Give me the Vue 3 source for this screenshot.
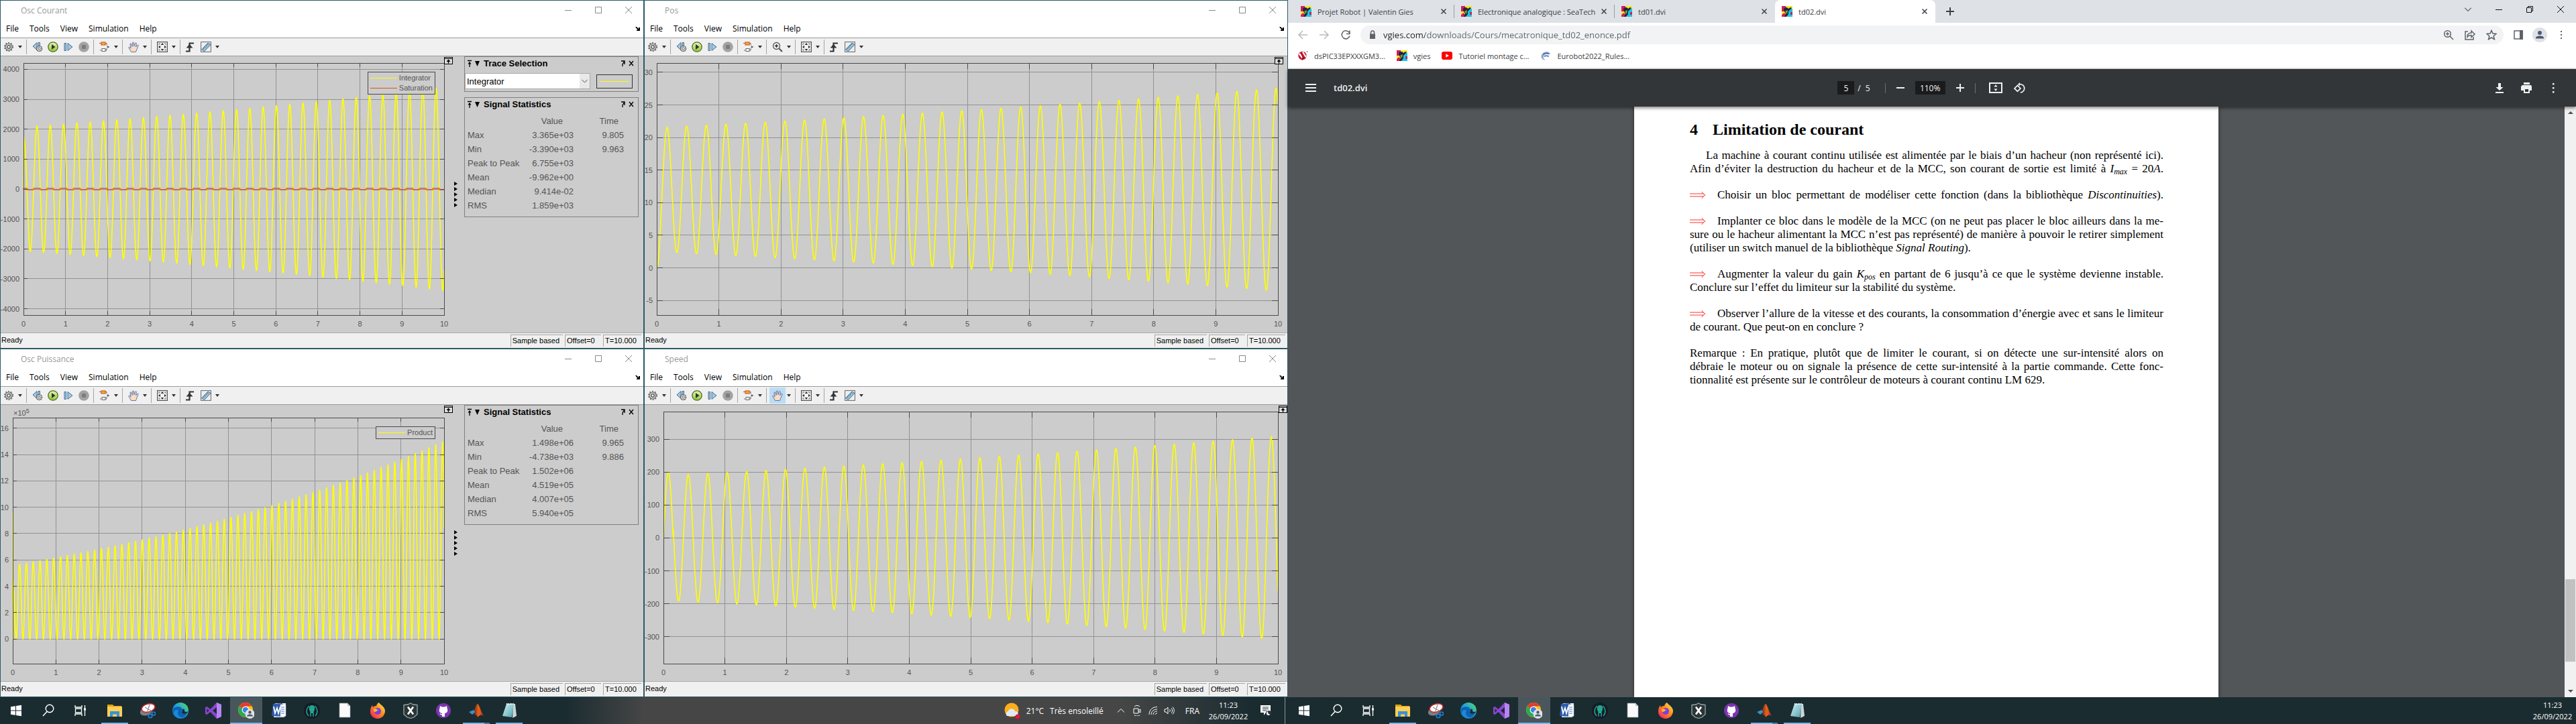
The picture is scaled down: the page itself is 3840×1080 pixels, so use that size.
<script setup>
const PERIOD = 0.3163

function curve(fn, min, max) {
  const pts = []
  for (let i = 0; i <= 4000; i++) {
    const t = i / 400
    const y = ((max - fn(t)) / (max - min)) * 1000
    pts.push(`${(t * 100).toFixed(1)},${y.toFixed(1)}`)
  }
  return pts.join(' ')
}

const grow = (t) => Math.exp(0.0494 * t)
const phase = (t) => (2 * Math.PI * t) / PERIOD

const current = (t) => {
  if (t < 0.01) return 120000 * t
  return (t < 0.08 ? 1740 : 2070) * grow(t) * Math.cos(phase(t - 0.004))
}
const saturation = (t) => (current(t) > 0 ? 20 : -20)
const position = (t) =>
  t < 0.165 ? 10.7 - 10.7 * Math.cos((Math.PI * t) / 0.165) : 12 - 9.5 * grow(t) * Math.cos(phase(t - 0.007))
const power = (t) => {
  if (t === 0) return 0
  if (t < 0.004) return 9.6
  return (t < 0.06 ? 4.6 : 5.6) * grow(t) ** 2 * (0.5 + 0.5 * Math.cos(2 * phase(t)))
}
const speed = (t) => (t < 0.16 ? 199 : 189) * grow(t) * Math.sin(phase(t - (t < 0.16 ? 0 : 0.009)))

const windows = [
  {
    id: 'courant', title: 'Osc Courant', tool: 'hand', min: -4210, max: 4210, cls: 'plot-wide-axis', tick: 6,
    labels: [4000, 3000, 2000, 1000, 0, -1000, -2000, -3000, -4000],
    curves: [{ color: '#ffff00', fn: current, w: 1.6 }, { color: '#d95319', fn: saturation, w: 2, o: 0.7 }],
    legend: [{ name: 'Integrator', color: '#ffff00' }, { name: 'Saturation', color: '#d95319' }],
    trace: true,
    stats: [['Max', '3.365e+03', '9.805'], ['Min', '-3.390e+03', '9.963'], ['Peak to Peak', '6.755e+03', ''], ['Mean', '-9.962e+00', ''], ['Median', '9.414e-02', ''], ['RMS', '1.859e+03', '']],
  },
  {
    id: 'pos', title: 'Pos', tool: 'lens', min: -7.25, max: 31.43, cls: 'plot-full popout-in', tick: 9,
    labels: [30, 25, 20, 15, 10, 5, 0, -5],
    curves: [{ color: '#ffff00', fn: position, w: 1.6 }],
  },
  {
    id: 'puissance', title: 'Osc Puissance', tool: 'hand', min: -1.87, max: 16.8, cls: 'plot-exponent', tick: 6,
    labels: [16, 14, 12, 10, 8, 6, 4, 2, 0], exponent: true,
    curves: [{ color: '#ffff00', fn: power, w: 1.6 }],
    legend: [{ name: 'Product', color: '#ffff00' }],
    stats: [['Max', '1.498e+06', '9.965'], ['Min', '-4.738e+03', '9.886'], ['Peak to Peak', '1.502e+06', ''], ['Mean', '4.519e+05', ''], ['Median', '4.007e+05', ''], ['RMS', '5.940e+05', '']],
  },
  {
    id: 'speed', title: 'Speed', tool: 'hand', pressed: true, min: -382, max: 384, cls: 'plot-full plot-mid-axis', tick: 9,
    labels: [300, 200, 100, 0, -100, -200, -300],
    curves: [{ color: '#ffff00', fn: speed, w: 1.6 }],
  },
]
windows.forEach((w) => {
  w.curves.forEach((c) => { c.points = curve(c.fn, w.min, w.max) })
  w.ticks = w.labels.map((v) => ({ v, y: `${(((w.max - v) / (w.max - w.min)) * 100).toFixed(3)}%` }))
})

const menus = ['File', 'Tools', 'View', 'Simulation', 'Help']
const xs = [0, 1, 2, 3, 4, 5, 6, 7, 8, 9, 10]

const tabs = ['Projet Robot | Valentin Gies', 'Electronique analogique : SeaTech', 'td01.dvi', 'td02.dvi']
const bookmarks = [
  { icon: 'microchip', name: 'dsPIC33EPXXXGM3...' },
  { icon: 'favicon', name: 'vgies' },
  { icon: 'youtube', name: 'Tutoriel montage c...' },
  { icon: 'eurobot', name: 'Eurobot2022_Rules...' },
]
const system = [['start', 'Démarrer'], ['find', 'Rechercher'], ['views', 'Affichage des tâches']]
const apps = [
  { icon: 'explorer', name: 'Explorateur', open: true },
  { icon: 'snip', name: 'Capture' },
  { icon: 'edge', name: 'Edge' },
  { icon: 'vs', name: 'Visual Studio' },
  { icon: 'chrome', name: 'Chrome', active: true },
  { icon: 'word', name: 'Word' },
  { icon: 'kraken', name: 'GitKraken' },
  { icon: 'file', name: 'Document' },
  { icon: 'firefox', name: 'Firefox' },
  { icon: 'xshield', name: 'MPLAB X' },
  { icon: 'github', name: 'GitHub' },
  { icon: 'matlab', name: 'MATLAB', open: true, stacked: true },
  { icon: 'notepad', name: 'Bloc-notes', open: true },
]
</script>

<template>
  <svg class="sprite" aria-hidden="true">
    <defs>
      <linearGradient id="g-orange" x1="0" y1="0" x2="1" y2="0"><stop offset="0" stop-color="#7a1d10" /><stop offset=".5" stop-color="#e8641b" /><stop offset="1" stop-color="#b3321a" /></linearGradient>
      <linearGradient id="g-edge" x1="0" y1="1" x2="1" y2="0"><stop offset="0" stop-color="#0c59a4" /><stop offset=".5" stop-color="#1b9de2" /><stop offset="1" stop-color="#5fe35a" /></linearGradient>
      <linearGradient id="g-fire" x1="1" y1="0" x2="0" y2="1"><stop offset="0" stop-color="#fff44f" /><stop offset=".45" stop-color="#ff8a1e" /><stop offset="1" stop-color="#f5156c" /></linearGradient>
      <linearGradient id="g-play" x1="0" y1="0" x2="0" y2="1"><stop offset="0" stop-color="#eaf7b4" /><stop offset="1" stop-color="#8cc63a" /></linearGradient>
      <linearGradient id="g-note" x1="0" y1="0" x2="1" y2="1"><stop offset="0" stop-color="#d4f2f5" /><stop offset="1" stop-color="#4fa3ad" /></linearGradient>
    </defs>
    <symbol id="app" viewBox="0 0 16 16"><rect x=".5" y=".5" width="15" height="15" fill="#f3f3f3" stroke="#9aa4ad" /><path d="M1 1h14v2H1z" fill="#8db4d6" /><path d="M2.500 9 6 7l1.500 1.500L5 11.500z" fill="#2a6fb0" /><path d="M6 7C8 6 8.500 3.500 9.500 3.500S12 9 14 12c-2-1-3-.5-5 1.500-.6-2-1-2.500-3-2.500l1.500-2.500z" fill="url(#g-orange)" /></symbol>
    <symbol id="gear" viewBox="0 0 16 16"><circle cx="8" cy="8" r="5" fill="#d8d8d8" stroke="#5a5a5a" stroke-width="1.100" /><circle cx="8" cy="8" r="6.300" fill="none" stroke="#5a5a5a" stroke-width="1.300" stroke-dasharray="2 2" /><circle cx="8" cy="8" r="2.300" fill="#f0f0f0" stroke="#4f4f4f" stroke-width="1.300" /></symbol>
    <symbol id="stepback" viewBox="0 0 16 16"><path d="M7 1.500v11L1 7zM9 1.500h2.500V8H9z" fill="#a5c8e4" stroke="#416f93" /><circle cx="10.500" cy="10.500" r="4" fill="#e2e2e2" stroke="#555" stroke-width="1.400" stroke-dasharray="2 .6" /><circle cx="10.500" cy="10.500" r="1.600" fill="#fff" stroke="#555" /></symbol>
    <symbol id="play" viewBox="0 0 16 16"><circle cx="8" cy="8" r="7.200" fill="url(#g-play)" stroke="#4e6b1e" stroke-width="1.300" /><path d="M6 4l5.500 4L6 12z" fill="#333" /></symbol>
    <symbol id="step" viewBox="0 0 16 16"><path d="M2 2.500h2.500v11H2zM7 2.500 14 8l-7 5.500z" fill="#a5c8e4" stroke="#416f93" /></symbol>
    <symbol id="stop" viewBox="0 0 16 16"><circle cx="8" cy="8" r="7.800" fill="#a3a3a3" /><path d="M5 5h6v6H5z" fill="#7d7d7d" /></symbol>
    <symbol id="blocks" viewBox="0 0 16 16"><path d="M5 2.500h6v3M11 8h4M8 13h3v-3M3 2.500H0M3 13H1" fill="none" stroke="#666" /><rect x="3" y="1" width="6" height="4" fill="#f7a45a" stroke="#d66b12" stroke-width="1.300" /><rect x="4" y="10.500" width="5" height="4" fill="#fff" stroke="#666" /><path d="M12 6l3 2-3 2z" fill="#666" /></symbol>
    <symbol id="hand" viewBox="0 0 16 16"><path d="M4.500 15.500 1 9.500c-.5-1.500 1-2 2-.5l1 1.200L3 4c0-1.500 1.500-1.700 2 0l1 3.500L6.500 2c.2-1.500 1.800-1.500 2 0l.2 5L10.500 2.500c.5-1.300 2-1 1.800.5l-.8 5L13.500 5.500c.9-1 2.100-.2 1.500 1L13 11.500l-1.500 4z" fill="#fbdcc0" stroke="#4a6cae" stroke-width=".9" /></symbol>
    <symbol id="lens" viewBox="0 0 16 16"><circle cx="6.500" cy="6.500" r="5" fill="#f3f6fa" stroke="#555" stroke-width="1.300" /><path d="M6.500 4v5M4 6.500h5" stroke="#222" stroke-width="1.300" /><path d="M10.500 10.500 15 15" stroke="#555" stroke-width="2.200" /></symbol>
    <symbol id="fit" viewBox="0 0 16 16"><rect x=".6" y=".6" width="14.800" height="14.800" fill="#f2f2f2" stroke="#555" stroke-width="1.200" /><path d="M8 2l2.300 3H5.700zM8 14l2.300-3H5.700zM2 8l3-2.300v4.600zM14 8l-3-2.300v4.600z" fill="#333" /><path d="M3 5V3h2M11 3h2v2M13 11v2h-2M5 13H3v-2" fill="none" stroke="#777" /></symbol>
    <symbol id="trigger" viewBox="0 0 16 16"><path d="M2 14.500h5.500V2.500H14" fill="none" stroke="#333" stroke-width="2.200" /><path d="M2.500 9.500 7.500 4l5 5.500z" fill="#333" /></symbol>
    <symbol id="ruler" viewBox="0 0 16 16"><rect x=".6" y=".6" width="14.800" height="14.800" fill="#eee" stroke="#666" /><path d="M1.500 12 11 2l4 2.500L5.500 14.500z" fill="#9cc7de" stroke="#3b6c8c" /><path d="M4 10l1.500 1M6 8l1.500 1M8 6l1.500 1M10 4l1.500 1" stroke="#2b4d66" /></symbol>
    <symbol id="popout" viewBox="0 0 13 11"><rect x=".5" y=".5" width="12" height="10" fill="#ddd" stroke="#000" /><path d="M1 2.500h11" stroke="#000" /><path d="M6.500 9.500V5" stroke="#000" stroke-width="1.500" /><path d="M3.500 7 6.500 3.500 9.500 7z" /></symbol>
    <symbol id="favicon" viewBox="0 0 16 16"><path fill="#f6e71d" d="M0 0h16v16H0z" /><path fill="#12c8e8" d="M9 4h7v12H8z" /><path fill="#d41c5c" d="M0 0h6v4H3v4H0zM0 13l4-3 3 6H0zM13 9h3v4h-3z" /><path d="M3 4c2-3 6-2 7 0l3-2 2 1-3 3-2 2v4l-3 4H4l2-5-3-4z" fill="#2b2140" /><path d="M5 8l4-2-1 6z" fill="#6db33c" /></symbol>
    <symbol id="microchip" viewBox="0 0 16 16"><circle cx="7.500" cy="8" r="6.200" fill="#c8102e" /><path d="M1.500 5.500 4.500 4 8 9.500 6.500 12zM7 3l2.500-1.500L14 8l-2 3z" fill="#fff" /><path d="M4.500 4 9 12l-2 3M9.500 2l3.500 6" stroke="#8f0b20" fill="none" /><circle cx="14.500" cy="2" r=".8" fill="#444" /></symbol>
    <symbol id="youtube" viewBox="0 0 16 16"><rect y="2" width="16" height="12" rx="3" fill="#f00" /><path d="M6.300 5.200 11 8l-4.700 2.800z" fill="#fff" /></symbol>
    <symbol id="eurobot" viewBox="0 0 16 16"><path d="M13 3C9 1 2 4 1.500 8.500S6 15 8 14.500C4.500 13 4 10 6 7.500S11 5 15.500 6z" fill="#8fa9cc" /><path d="M4 6c3-2 6-2 9-.5M6 9c2-1 4-1.200 7 0" stroke="#3d66a8" stroke-width="1.400" fill="none" /></symbol>
    <symbol id="start" viewBox="0 0 24 24"><path d="M4 6.300 11 5.200v6.300H4zM12 5l8-1.200v7.700h-8zM4 12.500h7v6.300L4 17.800zM12 12.500h8v7.700L12 19z" fill="#fff" /></symbol>
    <symbol id="find" viewBox="0 0 24 24"><circle cx="14" cy="9" r="5.800" fill="none" stroke="#fff" stroke-width="1.400" /><path d="M10 13.500 4 20" stroke="#fff" stroke-width="1.500" /></symbol>
    <symbol id="views" viewBox="0 0 24 24"><path d="M4 4v3h10V4M4 20v-3h10v3M4.500 9h9v6h-9zM18.500 4v16" fill="none" stroke="#fff" stroke-width="1.300" /><path d="M17 8.500h3v3h-3z" fill="#fff" /></symbol>
    <symbol id="explorer" viewBox="0 0 24 24"><path d="M1 3h8l2 2h11v6H1z" fill="#e2a00e" /><path d="M1 6h22v15H1z" fill="#fccf57" /><path d="M5 13h14v8h-4v-3.500H9V21H5z" fill="#3b91d4" /></symbol>
    <symbol id="snip" viewBox="0 0 24 24"><ellipse cx="10" cy="13" rx="9.500" ry="6" transform="rotate(-20 10 13)" fill="#777f86" /><ellipse cx="13" cy="8" rx="10" ry="6" transform="rotate(-15 13 8)" fill="#fff" stroke="#d22b2b" stroke-width="1.600" /><path d="M15 3l-3 10M8 7l9 5" stroke="#8a9299" stroke-width="1.300" /><circle cx="16" cy="20" r="2.700" fill="none" stroke="#1f7fd0" stroke-width="1.700" /><circle cx="21" cy="16.500" r="2.500" fill="none" stroke="#1f7fd0" stroke-width="1.700" /></symbol>
    <symbol id="edge" viewBox="0 0 24 24"><circle cx="12" cy="12" r="12" fill="url(#g-edge)" /><path d="M1 10C4 5 14 5 15 11c.3 2-1 3-1 4 0 2 5 3 8.500 0C20 22 12 24.500 6 21 2 18 0 14 1 10z" fill="#0d62b3" /><path d="M9 12c-3 4 0 10 7 10-6 3-13 0-14-6 0-5 5-6 7-4z" fill="#1a8ad8" /><path d="M15 11c.3 2-1 3-1 4 0 2 5 3 8.500 0l1.500-2c-3 2-6 1-6-1s-1-4-3-1z" fill="#1b2c31" /></symbol>
    <symbol id="vs" viewBox="0 0 24 24"><path d="M17 0l7 3v18l-7 3L7.500 14 2.500 18 0 17V7l2.500-1 5 4z" fill="#8a45d2" /><path d="M17 0l7 3v18l-7 3z" fill="#b884f2" /><path d="M17 7v10l-6-5zM2.500 9v6l3-3z" fill="#1b2c31" /></symbol>
    <symbol id="chrome" viewBox="0 0 24 24"><circle cx="11" cy="11" r="11" fill="#fbc116" /><path d="M11 11 1.500 5.500A11 11 0 0 1 20.500 5.500H11z" fill="#e33b2e" /><path d="M11 11l-9.500-5.500A11 11 0 0 0 11 22l5-8z" fill="#2da94f" /><circle cx="11" cy="11" r="5.400" fill="#fff" /><circle cx="11" cy="11" r="4.200" fill="#3f7fea" /><circle cx="17.500" cy="17" r="7" fill="#dfe3e8" /><circle cx="17.500" cy="14.500" r="2.200" fill="#4d5967" /><path d="M13 20.500c0-4 9-4 9 0z" fill="#4d5967" /></symbol>
    <symbol id="word" viewBox="0 0 24 24"><path d="M6 1h16v19l-3 2H4z" fill="#e9eef7" /><path d="M3 2 17 1v20L1 20z" fill="#2d5bab" /><path d="M14 3h8v17l-8 1z" fill="#fff" stroke="#b8c6de" stroke-width=".6" /><path d="M15 7h5M15 10h5M15 13h5M15 16h5" stroke="#4b77c0" /><path d="M4 6l2 10 3-8 2 8 3-10" fill="none" stroke="#fff" stroke-width="1.800" /></symbol>
    <symbol id="kraken" viewBox="0 0 24 24"><circle cx="12" cy="12" r="12" fill="#141b27" /><path d="M7 20C3 16 3 9 8 5M17 20c4-4 4-11-1-15M10 21v-6M14 21v-6" fill="none" stroke="#23a58f" stroke-width="1.500" /><path d="M12 4c5 0 5 6 3 9l-1 3h-4l-1-3c-2-3-2-9 3-9z" fill="#23a58f" /></symbol>
    <symbol id="file" viewBox="0 0 24 24"><path d="M4 1h12l4 4v17H4z" fill="#fafafa" stroke="#999" stroke-width=".7" /><path d="M16 1v4h4z" fill="#bbb" /></symbol>
    <symbol id="firefox" viewBox="0 0 24 24"><path d="M14 0c1 3 8 5 9 12 0 7-5 12-11 12S0 19 1 12c0-4 2-6 3-8l1 3c2-2 4-2 5-2 1-3 2-4 4-5z" fill="url(#g-fire)" /><circle cx="12" cy="13" r="5" fill="#7a3fe0" /><path d="M6 10c3-2 5 1 7 1-1 2-3 1-4 3-2 0-4-2-3-4z" fill="#ffb52e" /></symbol>
    <symbol id="xshield" viewBox="0 0 24 24"><path d="M12 1 16 3l6 .5v14L17 22l-5 1.500L7 22l-5-4.500v-14L8 3z" fill="#2c3638" stroke="#9aa5a8" stroke-width="1.300" /><path d="M8 6.500l8 11M16 6.500l-8 11" stroke="#fff" stroke-width="2.800" /></symbol>
    <symbol id="github" viewBox="0 0 24 24"><circle cx="12" cy="12" r="11" fill="#7b35b0" /><path d="M7 5l3 1.500h4L17 5l.7 4c1.500 4 0 6.500-3.700 7v5h-4v-2.500c-3 .5-3-2-4-2.500 2 0 2 1.500 4 1v-1C6.300 15.500 4.800 13 6.300 9z" fill="#fff" /></symbol>
    <symbol id="matlab" viewBox="0 0 24 24"><path d="M1 14l7-3 3 3-5 4z" fill="#3a8fc4" /><path d="M8 11c3-2 4-9 6-9s5 12 9 18c-4-3-6-1-9 2-1-3-2-4-5-4l2-4z" fill="url(#g-orange)" /></symbol>
    <symbol id="notepad" viewBox="0 0 24 24"><path d="M18 2h3l2 18-6 3z" fill="#cdd5d8" /><path d="M8 2h11l-3 20-14-2z" fill="url(#g-note)" /><path d="M8 2h11" stroke="#fff" stroke-width="2" stroke-dasharray="1.500 1" /></symbol>
  </svg>

  <main class="desktops">
    <section class="desktop">
      <div class="scopes">
        <article v-for="w in windows" :key="w.id" class="scope">
          <header class="title">
            <svg class="i16"><use href="#app" /></svg>
            <h2>{{ w.title }}</h2>
            <div class="controls">
              <button aria-label="Réduire"><svg viewBox="0 0 10 10"><path d="M0 5.500h10" /></svg></button>
              <button aria-label="Agrandir"><svg viewBox="0 0 10 10"><path d="M.5.5h9v9h-9z" /></svg></button>
              <button aria-label="Fermer"><svg viewBox="0 0 10 10"><path d="M0 0l10 10M10 0 0 10" /></svg></button>
            </div>
          </header>
          <nav class="menu">
            <button v-for="m in menus" :key="m">{{ m }}</button>
            <svg class="dock" viewBox="0 0 7 6"><path d="M0 0h2l3 3V1h2v5H2V4.500h1.500z" /></svg>
          </nav>
          <div class="tools">
            <button class="drop" aria-label="Configuration"><svg class="i16"><use href="#gear" /></svg><i></i></button>
            <span class="group">
              <button aria-label="Reculer"><svg class="i16"><use href="#stepback" /></svg></button>
              <button aria-label="Lancer"><svg class="i16"><use href="#play" /></svg></button>
              <button aria-label="Avancer"><svg class="i16"><use href="#step" /></svg></button>
              <button aria-label="Arrêter"><svg class="i16"><use href="#stop" /></svg></button>
            </span>
            <button class="drop" aria-label="Blocs"><svg class="i16"><use href="#blocks" /></svg><i></i></button>
            <button class="drop" :class="{ pressed: w.pressed }" aria-label="Déplacer"><svg class="i16"><use :href="'#' + w.tool" /></svg><i></i></button>
            <button class="drop" aria-label="Ajuster"><svg class="i16"><use href="#fit" /></svg><i></i></button>
            <button class="plain" aria-label="Déclencheur"><svg class="i16"><use href="#trigger" /></svg></button>
            <button class="drop last" aria-label="Mesures"><svg class="i16"><use href="#ruler" /></svg><i></i></button>
          </div>
          <div class="canvas">
            <div class="plot" :class="w.cls">
              <svg class="axes" role="img" :aria-label="w.title">
                <g class="grid">
                  <line v-for="x in xs.slice(1, 10)" :key="'g' + x" :x1="x * 10 + '%'" :x2="x * 10 + '%'" y1="0" y2="100%" />
                  <line v-for="k in w.ticks" :key="k.v" :y1="k.y" :y2="k.y" x1="0" x2="100%" />
                </g>
                <svg width="100%" height="100%" viewBox="0 0 1000 1000" preserveAspectRatio="none">
                  <polyline v-for="(c, i) in w.curves" :key="i" :points="c.points" fill="none" :stroke="c.color" :stroke-width="c.w" :stroke-opacity="c.o || 1" stroke-linejoin="round" vector-effect="non-scaling-stroke" />
                </svg>
                <g class="frame">
                  <rect width="100%" height="100%" />
                  <template v-for="x in xs.slice(1, 10)" :key="'t' + x">
                    <svg :x="x * 10 + '%'" y="0"><path :d="`M0 0v${w.tick}`" /></svg>
                    <svg :x="x * 10 + '%'" y="100%"><path :d="`M0 0v-${w.tick}`" /></svg>
                  </template>
                  <template v-for="k in w.ticks" :key="k.v">
                    <svg x="0" :y="k.y"><path :d="`M0 0h${w.tick}`" /></svg>
                    <svg x="100%" :y="k.y"><path :d="`M0 0h-${w.tick}`" /></svg>
                  </template>
                </g>
                <text v-for="x in xs" :key="'x' + x" :x="x * 10 + '%'" y="100%" dy="17" text-anchor="middle">{{ x }}</text>
                <text v-for="k in w.ticks" :key="'y' + k.v" x="-6" :y="k.y" dy="4" text-anchor="end">{{ k.v }}</text>
                <text v-if="w.exponent" x="1" y="-3">×10<tspan dy="-4" class="sup">5</tspan></text>
              </svg>
              <ul v-if="w.legend" class="legend">
                <li v-for="l in w.legend" :key="l.name"><b :style="{ background: l.color }"></b>{{ l.name }}</li>
              </ul>
              <svg class="popout"><use href="#popout" /></svg>
            </div>
            <div v-if="w.stats" class="splitter"><i v-for="n in 5" :key="n"></i></div>
            <aside v-if="w.stats" class="side">
              <section v-if="w.trace" class="panel">
                <h3><svg viewBox="0 0 22 12"><path d="M2 1.500h6M5 11V4" stroke="#000" stroke-width="1.300" /><path d="M2.500 6.500 5 3l2.500 3.500zM13 2h7l-3.500 8z" /></svg>Trace Selection
                  <svg class="end" viewBox="0 0 22 12"><path d="M2 2h5v5M7 2 4 7v3M14 2l6 7M20 2l-6 7" fill="none" stroke="#000" stroke-width="1.300" /></svg></h3>
                <div class="trace">
                  <select aria-label="Trace"><option>Integrator</option></select>
                  <button aria-label="Couleur"><b></b></button>
                </div>
              </section>
              <section class="panel">
                <h3><svg viewBox="0 0 22 12"><path d="M2 1.500h6M5 11V4" stroke="#000" stroke-width="1.300" /><path d="M2.500 6.500 5 3l2.500 3.500zM13 2h7l-3.500 8z" /></svg>Signal Statistics
                  <svg class="end" viewBox="0 0 22 12"><path d="M2 2h5v5M7 2 4 7v3M14 2l6 7M20 2l-6 7" fill="none" stroke="#000" stroke-width="1.300" /></svg></h3>
                <table>
                  <thead><tr><th></th><th>Value</th><th>Time</th></tr></thead>
                  <tbody><tr v-for="r in w.stats" :key="r[0]"><th>{{ r[0] }}</th><td>{{ r[1] }}</td><td>{{ r[2] }}</td></tr></tbody>
                </table>
              </section>
            </aside>
          </div>
          <footer class="status"><span class="ready">Ready</span><span>Sample based</span><span>Offset=0</span><span class="time">T=10.000</span></footer>
        </article>
      </div>
    </section>

    <section class="browser">
      <div class="tabs">
        <div v-for="(t, i) in tabs" :key="t" class="tab" :class="{ current: i === 3, before: i === 2 }">
          <svg class="i16"><use href="#favicon" /></svg><a href="#">{{ t }}</a>
          <button aria-label="Fermer l'onglet"><svg viewBox="0 0 8 8"><path d="M.5.5l7 7M7.500.5l-7 7" /></svg></button>
        </div>
        <button class="newtab" aria-label="Nouvel onglet"><svg viewBox="0 0 12 12"><path d="M6 0v12M0 6h12" /></svg></button>
        <div class="controls">
          <button aria-label="Onglets"><svg viewBox="0 0 10 10"><path d="M0 2.500l5 5 5-5" /></svg></button>
          <button aria-label="Réduire"><svg viewBox="0 0 10 10"><path d="M0 5.500h10" /></svg></button>
          <button aria-label="Restaurer"><svg viewBox="0 0 10 10"><path d="M.5 2.500h7v7h-7zM2.500 2V.5h7v7H8" /></svg></button>
          <button aria-label="Fermer"><svg viewBox="0 0 10 10"><path d="M0 0l10 10M10 0 0 10" /></svg></button>
        </div>
      </div>
      <div class="navbar">
        <button class="off" aria-label="Précédent"><svg viewBox="0 0 16 16"><path d="M15 8H2M8 2 2 8l6 6" /></svg></button>
        <button class="off" aria-label="Suivant"><svg viewBox="0 0 16 16"><path d="M1 8h13M8 2l6 6-6 6" /></svg></button>
        <button aria-label="Actualiser"><svg viewBox="0 0 16 16"><path d="M13.500 5A6 6 0 1 0 14 9.500M14 1.500v5H9" /></svg></button>
        <div class="address">
          <svg class="lock" viewBox="0 0 10 14"><path d="M1 5.500h8V13H1z" fill="#5f6368" /><path d="M2.500 6V3.500a2.500 2.500 0 0 1 5 0V6" fill="none" stroke="#5f6368" stroke-width="1.500" /></svg>
          <input aria-label="Adresse" value="vgies.com/downloads/Cours/mecatronique_td02_enonce.pdf" spellcheck="false">
          <button aria-label="Zoom"><svg viewBox="0 0 16 16"><circle cx="6.500" cy="6.500" r="4.800" /><path d="M10 10l5 5M6.500 4v5M4 6.500h5" /></svg></button>
          <button aria-label="Partager"><svg viewBox="0 0 16 16"><path d="M5 3H1v12h12v-4M4 11c0-4 2-6 6-6V2l5 5-5 4.500V8.500C7 8.500 5.500 9 4 11z" /></svg></button>
          <button aria-label="Favori"><svg viewBox="0 0 16 16"><path d="M8 1.500l2 4.600 5 .4-3.800 3.300 1.200 4.900L8 12l-4.400 2.700 1.200-4.900L1 6.500l5-.4z" /></svg></button>
        </div>
        <button aria-label="Panneau latéral"><svg viewBox="0 0 16 16"><path d="M2 2h12v12H2z" /><path d="M10 1h5v14h-5z" fill="#5f6368" stroke="none" /></svg></button>
        <button aria-label="Profil" class="profile"><svg viewBox="0 0 22 22"><circle cx="11" cy="11" r="11" fill="#dfe1e6" stroke="none" /><circle cx="11" cy="8" r="3" fill="#4b5a70" stroke="none" /><path d="M5 16.500v-1c0-4 12-4 12 0v1z" fill="#4b5a70" stroke="none" /></svg></button>
        <button aria-label="Menu"><svg viewBox="0 0 16 16"><path d="M7 2h2v2H7zM7 7h2v2H7zM7 12h2v2H7z" fill="#5f6368" stroke="none" /></svg></button>
      </div>
      <nav class="bookmarks"><a v-for="b in bookmarks" :key="b.name" href="#"><svg class="i16"><use :href="'#' + b.icon" /></svg>{{ b.name }}</a></nav>
      <div class="pdfbar">
        <div class="name"><button aria-label="Sommaire"><svg viewBox="0 0 16 12"><path d="M0 0h16v2H0zM0 5h16v2H0zM0 10h16v2H0z" /></svg></button><h1>td02.dvi</h1></div>
        <div class="pager">
          <input class="page-no" aria-label="Page" value="5"><span>/</span><span class="count">5</span><i></i>
          <button aria-label="Zoom arrière"><svg viewBox="0 0 12 12"><path d="M0 5h12v2H0z" /></svg></button>
          <input class="zoom" aria-label="Zoom" value="110%">
          <button aria-label="Zoom avant"><svg viewBox="0 0 12 12"><path d="M5 0h2v5h5v2H7v5H5V7H0V5h5z" /></svg></button><i></i>
          <button class="big" aria-label="Ajuster à la page"><svg viewBox="0 0 20 16"><path d="M1 1h18v14H1z" fill="none" stroke="#f1f1f1" stroke-width="2" /><path d="M10 3l2.500 3.500h-5zM10 13l2.500-3.500h-5z" /></svg></button>
          <button class="big" aria-label="Pivoter"><svg viewBox="0 0 20 18"><path d="M6 5l5 5-5 5-5-5z M9 3c10-1 12 12 2 14" fill="none" stroke="#f1f1f1" stroke-width="2" /><path d="M10 0v6L6.500 3z" /></svg></button>
        </div>
        <div class="actions">
          <button aria-label="Télécharger"><svg viewBox="0 0 16 16"><path d="M6 1h4v6h3.500L8 12 2.500 7H6zM2 14h12v2H2z" /></svg></button>
          <button aria-label="Imprimer"><svg viewBox="0 0 16 16"><path d="M4 0h9v3H4zM2 4h13l1 2v6h-3v4H4v-4H0V6zM6 10v4h5v-4z" fill-rule="evenodd" /></svg></button>
          <button aria-label="Plus"><svg viewBox="0 0 16 16"><path d="M7 1h2.500v2.500H7zM7 7h2.500v2.500H7zM7 13h2.500v2.500H7z" /></svg></button>
        </div>
      </div>
      <div class="viewer">
        <div class="sheetwrap">
          <article class="sheet">
            <h2><span>4</span>Limitation de courant</h2>
            <p><span class="ln full indent">La machine à courant continu utilisée est alimentée par le biais d’un hacheur (non représenté ici).</span>
              <span class="ln full">Afin d’éviter la destruction du hacheur et de la MCC, son courant de sortie est limité à <em>I<sub>max</sub></em> = 20<em>A</em>.</span></p>
            <p><span class="ln full"><svg class="arrow" viewBox="0 0 24 10"><path d="M0 3h21M0 7h21M18 0c1 3 3 4 5 5-2 1-4 2-5 5" /></svg>Choisir un bloc permettant de modéliser cette fonction (dans la bibliothèque <em>Discontinuities</em>).</span></p>
            <p><span class="ln full"><svg class="arrow" viewBox="0 0 24 10"><path d="M0 3h21M0 7h21M18 0c1 3 3 4 5 5-2 1-4 2-5 5" /></svg>Implanter ce bloc dans le modèle de la MCC (on ne peut pas placer le bloc ailleurs dans la me-</span>
              <span class="ln full">sure ou le hacheur alimentant la MCC n’est pas représenté) de manière à pouvoir le retirer simplement</span>
              <span class="ln">(utiliser un switch manuel de la bibliothèque <em>Signal Routing</em>).</span></p>
            <p><span class="ln full"><svg class="arrow" viewBox="0 0 24 10"><path d="M0 3h21M0 7h21M18 0c1 3 3 4 5 5-2 1-4 2-5 5" /></svg>Augmenter la valeur du gain <em>K<sub>pos</sub></em> en partant de 6 jusqu’à ce que le système devienne instable.</span>
              <span class="ln">Conclure sur l’effet du limiteur sur la stabilité du système.</span></p>
            <p><span class="ln full"><svg class="arrow" viewBox="0 0 24 10"><path d="M0 3h21M0 7h21M18 0c1 3 3 4 5 5-2 1-4 2-5 5" /></svg>Observer l’allure de la vitesse et des courants, la consommation d’énergie avec et sans le limiteur</span>
              <span class="ln">de courant. Que peut-on en conclure ?</span></p>
            <p><span class="ln full">Remarque : En pratique, plutôt que de limiter le courant, si on détecte une sur-intensité alors on</span>
              <span class="ln full">débraie le moteur ou on signale la présence de cette sur-intensité à la partie commande. Cette fonc-</span>
              <span class="ln">tionnalité est présente sur le contrôleur de moteurs à courant continu LM 629.</span></p>
          </article>
        </div>
        <div class="scrollbar"><svg viewBox="0 0 8 4"><path d="M0 4l4-4 4 4z" /></svg><i class="before"></i><i class="thumb"></i><i class="after"></i><svg viewBox="0 0 8 4"><path d="M0 0l4 4 4-4z" /></svg></div>
      </div>
    </section>

    <footer v-for="side in 2" :key="side" class="taskbar" :class="{ primary: side === 1 }">
      <button v-for="s in system" :key="s[0]" class="sys" :aria-label="s[1]"><svg><use :href="'#' + s[0]" /></svg></button>
      <div class="apps">
        <button v-for="a in apps" :key="a.icon" :class="{ open: a.open, active: a.active, stacked: a.stacked }" :aria-label="a.name"><svg><use :href="'#' + a.icon" /></svg></button>
      </div>
      <div class="tray">
        <template v-if="side === 1">
          <button class="weather">
            <svg viewBox="0 0 24 24"><circle cx="11" cy="11" r="10.500" fill="#ffae19" /><path d="M4 20a4 4 0 0 1 2-7c1-5 9-5 10 0 6 0 6 7 1 7z" fill="#dcebfa" /><circle cx="20" cy="21" r="3.500" fill="#e0143c" /></svg>
            <span>21°C</span><span>Très ensoleillé</span>
          </button>
          <svg class="t" viewBox="0 0 16 16"><path d="M3 10.500l5-5 5 5" /></svg>
          <svg class="t" viewBox="0 0 16 16"><path d="M3 5h7v7H3zM10 8l3-2v5l-3-2M4 2c2-2 6-2 8 0M4 15c2 1.500 6 1.500 8 0" /></svg>
          <svg class="t" viewBox="0 0 16 16"><path d="M2 14C2 7 7 2.500 14 2.500M5 14c0-5 4-8 9-8M8 14c0-3 2-5 6-5M11 14c0-1 1-2 3-2" /></svg>
          <svg class="t" viewBox="0 0 16 16"><path d="M1 6h2l3-3v10l-3-3H1zM8.500 6c1 1 1 3 0 4M11 4c2 2 2 6 0 8M13 2.500c3 3 3 8 0 11" /></svg>
          <span class="lang">FRA</span>
        </template>
        <time>11:23<br>26/09/2022</time>
        <svg v-if="side === 1" class="note" viewBox="0 0 18 18"><path d="M1 1h15v11H9l-3 4v-4H1z" fill="#fff" /><path d="M4 4h9M4 6.500h9M4 9h6" stroke="#1d2c31" /><circle cx="13" cy="13" r="4" fill="#24343a" /><path d="M15.500 14.500a3 3 0 1 1-3-4.500 3 3 0 0 0 3 4.500z" fill="#fff" /></svg>
      </div>
    </footer>
  </main>
</template>

<style>
body { background: #1b2c31; }
</style>

<style scoped>
.sprite { position: absolute; width: 0; height: 0; }
* { box-sizing: border-box; }
button { font: inherit; color: inherit; background: none; border: 0; padding: 0; margin: 0; }
h1, h2, h3, p, ul { margin: 0; padding: 0; font-weight: 400; }
svg { display: block; }
a { color: inherit; text-decoration: none; }
.i16 { width: 16px; height: 16px; flex: none; }

.desktops { display: grid; grid-template-columns: 1fr 1fr; grid-template-rows: 1fr 40px; min-height: 100vh; font: 12px "Open Sans", "Noto Sans", sans-serif; }
.desktop { display: flex; min-width: 0; }
.scopes { flex: 1; display: grid; grid-template-columns: 1fr 1fr; grid-template-rows: 1fr 1fr; min-width: 0; }
.scope { display: flex; flex-direction: column; border: 1px solid #2b5a68; background: #fff; min-width: 0; }
.title { display: flex; align-items: center; height: 28px; padding-left: 8px; color: #999; flex: none; }
.title h2 { font-size: 12px; margin-left: 6px; }
.controls { display: flex; margin-left: auto; height: 100%; }
.controls button { width: 45px; display: grid; place-items: center; }
.controls svg { width: 10px; height: 10px; fill: none; stroke: #888; }
.menu { display: flex; align-items: center; gap: 16px; height: 27px; padding: 0 5px 0 8px; color: #000; flex: none; }
.dock { width: 7px; height: 6px; margin-left: auto; }
.tools { display: flex; align-items: center; height: 28px; flex: none; background: #f0f0f0; border-top: 1px solid #9b9b9b; border-bottom: 1px solid #9b9b9b; padding-left: 4px; }
.tools .drop { display: flex; align-items: center; width: 43px; height: 22px; padding-left: 8px; border-right: 1px solid #a5a5a5; }
.tools .drop:first-child { padding-left: 0; width: 35px; }
.tools .last { border: 0; padding-left: 4px; }
.tools .plain { padding-left: 6px; width: 26px; }
.tools .drop i { margin-left: 6px; border: 3px solid transparent; border-top: 4px solid #333; border-bottom: 0; }
.tools .pressed svg { outline: 4px solid #bcdcf4; background: #bcdcf4; }
.group { display: flex; gap: 7px; width: 100px; height: 22px; align-items: center; padding-left: 8px; border-right: 1px solid #a5a5a5; }

.canvas { flex: 1; display: flex; background: #ccc; min-height: 0; }
.plot { flex: 1; min-width: 0; position: relative; padding: 10px 13px 26px 34px; }
.plot-full { padding-left: 18px; padding-right: 14px; }
.plot-mid-axis { padding-left: 28px; }
.plot-exponent { padding-left: 18px; padding-top: 19px; }
.axes { width: 100%; height: 100%; overflow: visible; font: 11px "Liberation Sans", Arial, sans-serif; fill: #555; }
.axes svg { overflow: visible; }
.sup { font-size: 9px; }
.grid line { stroke: #929292; shape-rendering: crispEdges; }
.frame rect, .frame path { fill: none; stroke: #4a4a4a; shape-rendering: crispEdges; }
.popout { position: absolute; top: 1px; right: 0; width: 13px; height: 11px; }
.popout-in .popout { right: 6px; }
.legend { position: absolute; top: 23px; right: 26px; list-style: none; border: 1px solid #4a4a4a; background: #ccc; padding: 1px 3px; font: 11px/15px "Liberation Sans", Arial, sans-serif; color: #555; }
.plot-exponent .legend { top: 32px; }
.legend li { display: flex; align-items: center; gap: 3px; }
.legend b { width: 40px; height: 1px; }
.splitter { display: flex; flex-direction: column; justify-content: center; gap: 2px; width: 17px; padding-left: 2px; }
.splitter i { width: 0; border: 3px solid transparent; border-left: 5px solid #000; border-right: 0; }
.side { width: 260px; margin-right: 7px; display: flex; flex-direction: column; gap: 8px; font: 13px "Liberation Sans", Arial, sans-serif; color: #555; }
.panel { border: 1px solid #808080; }
.panel h3 { display: flex; align-items: center; height: 20px; padding: 0 5px 0 2px; font-size: 13px; line-height: 20px; font-weight: 700; color: #000; gap: 4px; }
.panel h3 svg { width: 22px; height: 12px; flex: none; }
.panel h3 .end { margin-left: auto; }
.trace { display: flex; gap: 9px; padding: 3px 8px 2px 0; height: 31px; align-items: center; }
.trace select { flex: 1; height: 24px; appearance: none; border: 1px solid #aaa; border-radius: 0; padding: 0 2px; color: #000; font: 13px "Liberation Sans", Arial, sans-serif; background: #fff right / 15px 100% no-repeat; background-image: url("data:image/svg+xml,%3Csvg xmlns='http://www.w3.org/2000/svg' width='15' height='24'%3E%3Cpath fill='%23e9e9e9' d='M0 0h15v24H0z'/%3E%3Cpath d='M3.500 10l4 4 4-4' fill='none' stroke='%23444'/%3E%3C/svg%3E"); }
.trace button { width: 54px; height: 21px; border: 1px solid #333; padding: 0 5px; display: flex; align-items: center; }
.trace button b { flex: 1; height: 1px; background: #ff0; }
.panel table { width: 100%; border-collapse: collapse; table-layout: fixed; margin: 4px 0 6px; }
.panel th, .panel td { height: 21px; padding: 0; text-align: right; font-weight: 400; white-space: nowrap; }
.panel th:first-child { width: 84px; padding-left: 4px; text-align: left; }
.panel th:nth-child(2), .panel td:nth-child(2) { width: 78px; }
.panel thead th:nth-child(2) { padding-right: 16px; }
.panel td:nth-child(3) { padding-right: 21px; }
.panel thead th:nth-child(3) { padding-right: 29px; }
.status { display: flex; align-items: center; gap: 3px; height: 23px; flex: none; background: #f0f0f0; border-top: 1px solid #aaa; padding: 0 3px 0 1px; font: 11px "Liberation Sans", Arial, sans-serif; color: #000; }
.status span { height: 18px; line-height: 17px; padding: 0 5px 0 2px; border-left: 1px solid #a5a5a5; border-top: 1px solid #a5a5a5; min-width: 54px; }
.status .time { min-width: 57px; }
.status .ready { flex: 1; border: 0; padding: 0; }

.browser { display: flex; flex-direction: column; min-width: 0; background: #fff; color: #3c4043; }
.tabs { display: flex; height: 34px; flex: none; background: #dee1e6; padding-left: 9px; }
.tab { width: 239px; display: flex; align-items: center; padding: 0 12px 0 10px; gap: 9px; font-size: 11px; background: linear-gradient(#9aa0a6, #9aa0a6) right / 1px 20px no-repeat; }
.tab.before, .tab.current { background-image: none; }
.tab.current { background: #fff; border-radius: 8px 8px 0 0; }
.tab a { flex: 1; overflow: hidden; white-space: nowrap; }
.tab button svg { width: 8px; height: 8px; stroke: #3c4043; stroke-width: 1.5; }
.newtab { margin-left: 16px; }
.newtab svg { width: 12px; height: 12px; stroke: #3c4043; stroke-width: 2; }
.tabs .controls { height: 28px; }
.tabs .controls button { width: 46px; }
.tabs .controls svg { stroke: #111; }
.navbar { display: flex; align-items: center; height: 36px; flex: none; padding: 0 6px; }
.navbar button { width: 32px; display: grid; place-items: center; flex: none; }
.navbar svg { width: 16px; height: 16px; fill: none; stroke: #5f6368; stroke-width: 1.5; }
.navbar .off svg { stroke: #bbb; }
.navbar .profile svg { width: 22px; height: 22px; }
.address { flex: 1; display: flex; align-items: center; height: 28px; border-radius: 14px; background: #f1f3f4; padding: 0 2px 0 13px; margin: 0 6px; }
.address .lock { width: 10px; height: 14px; margin-right: 11px; stroke: none; }
.address input { flex: 1; min-width: 0; border: 0; padding: 0; font: 13px "Open Sans", "Noto Sans", sans-serif; color: #5f6368; background: linear-gradient(90deg, #202124 62px, #5f6368 62px); -webkit-background-clip: text; background-clip: text; -webkit-text-fill-color: transparent; }
.bookmarks { display: flex; align-items: center; gap: 17px; height: 33px; flex: none; padding: 0 14px 6px; border-bottom: 1px solid #d5d5d5; font-size: 11px; }
.bookmarks a { display: flex; align-items: center; gap: 9px; }
.pdfbar { display: grid; grid-template-columns: 1fr auto 1fr; align-items: center; height: 56px; flex: none; background: #323639; color: #f1f1f1; padding: 0 26px; box-shadow: 0 2px 5px rgba(0, 0, 0, .5); z-index: 1; }
.pdfbar svg { fill: #f1f1f1; width: 16px; height: 16px; }
.name { display: flex; align-items: center; gap: 26px; }
.name svg { height: 12px; }
.name h1 { font-size: 13px; font-weight: 600; }
.pager { display: flex; align-items: center; }
.pager input { height: 20px; border: 0; padding: 0; background: #191b1c; color: #f1f1f1; text-align: center; font: 12px "Open Sans", sans-serif; }
.pager .page-no { width: 25px; }
.pager .zoom { width: 45px; }
.pager span { padding-left: 5px; }
.pager .count { padding-left: 7px; }
.pager i { width: 1px; height: 15px; margin-left: 22px; background: #6c6f71; }
.pager button { margin: 0 16px; }
.pager .zoom + button { margin-right: 0; }
.pager button svg { width: 12px; height: 12px; }
.pager .zoom + button + i { margin-left: 16px; }
.pager .big { margin: 0 0 0 20px; }
.pager .big + .big { margin-left: 16px; }
.pager .big svg { width: 20px; height: 16px; }
.actions { display: flex; justify-content: flex-end; gap: 24px; }
.viewer { flex: 1; display: flex; background: #525659; min-height: 0; }
.sheetwrap { flex: 1; display: flex; justify-content: center; }
.sheet { width: 871px; padding: 20px 82px 40px 83px; background: #fff; color: #000; box-shadow: 0 0 5px rgba(0, 0, 0, .6); font: 17px/20px "Liberation Serif", "Times New Roman", serif; }
.sheet h2 { display: flex; gap: 22px; font-size: 24px; line-height: 28px; font-weight: 700; margin-bottom: 15px; }
.sheet p { margin-bottom: 19px; }
.ln { display: block; white-space: nowrap; }
.full { text-align-last: justify; }
.indent { padding-left: 24px; }
.sheet sub { font-size: 12px; line-height: 0; vertical-align: -3px; }
.arrow { display: inline-block; width: 24px; height: 10px; margin-right: 17px; fill: none; stroke: #f33; }
.scrollbar { width: 17px; display: flex; flex-direction: column; align-items: center; padding: 7px 0; background: #f1f1f1; }
.scrollbar svg { width: 8px; height: 4px; fill: #505050; flex: none; }
.scrollbar .before { flex: 692; }
.scrollbar .thumb { flex: 123; width: 15px; background: #c1c1c1; }
.scrollbar .after { flex: 42; }

.taskbar { display: flex; height: 40px; background: #1b2c31; color: #fff; min-width: 0; }
.taskbar.primary { background: linear-gradient(90deg, #1b2c31 44%, #464646 50%, #464646 87%, #1b2c31 97%); }
.taskbar svg { width: 24px; height: 24px; }
.taskbar .sys { width: 48px; display: grid; place-items: center; }
.apps { display: flex; gap: 1px; padding-left: 3px; }
.apps button { width: 48px; height: 40px; display: grid; place-items: center; background: linear-gradient(#76b9ed, #76b9ed) bottom / 0 2px no-repeat; }
.apps .open { background-size: 40px 2px; }
.apps .active { background-color: #49575c; background-size: 48px 2px; }
.apps .stacked { background-image: linear-gradient(90deg, #76b9ed 32px, #4a7da6 32px); }
.tray { display: flex; align-items: center; margin-left: auto; }
.primary .tray { height: 40px; padding-right: 4px; background: linear-gradient(#8a9599, #8a9599) right 4px top / 1px 100% no-repeat; }
.weather { display: flex; align-items: center; gap: 9px; margin-right: 14px; font-size: 12px; }
.tray .t { width: 16px; height: 16px; margin: 0 4px; fill: none; stroke: #fff; stroke-width: 1; }
.lang { margin: 0 12px 0 12px; }
.tray time { width: 62px; margin-right: 4px; text-align: center; font-size: 11px; line-height: 17px; }
.primary .tray time { margin-right: 16px; }
.tray .note { width: 18px; height: 18px; margin-right: 20px; }
</style>
